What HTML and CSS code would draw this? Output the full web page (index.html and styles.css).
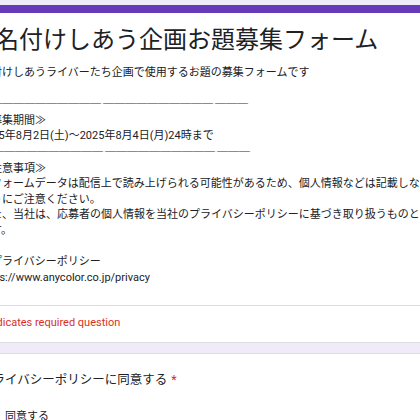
FILE: index.html
```html
<!DOCTYPE html>
<html lang="ja">

<head>
    <meta charset="UTF-8" />
    <meta name="viewport" content="width=device-width, initial-scale=1.0" />
    <title>名付けしあう企画お題募集フォーム</title>
    <link rel="stylesheet" href="styles.css">
</head>

<body>
    <div class="form">
        <!-- ヘッダー -->
        <div class="card head-card">
            <div class="accent"></div>
            <div class="head">
                <h1 class="title">名付けしあう企画お題募集フォーム</h1>
                <div class="desc">名付けしあうライバーたち企画で使用するお題の募集フォームです

<span class="rule">───────────</span><span class="rule">──────────</span><span class="rule">───</span>
≪募集期間≫
2025年8月2日(土)〜2025年8月4日(月)24時まで
<span class="rule">───────────</span><span class="rule">──────────</span><span class="rule">───</span>
≪注意事項≫
本フォームデータは配信上で読み上げられる可能性があるため、個人情報などは記載しないようにご注意ください。
また、当社は、応募者の個人情報を当社のプライバシーポリシーに基づき取り扱うものとします。

◆プライバシーポリシー
https://www.anycolor.co.jp/privacy</div>
            </div>
            <div class="required">* Indicates required question</div>
        </div>

        <!-- 質問 -->
        <div class="card question">
            <div class="q-title">プライバシーポリシーに同意する<span class="star">*</span></div>
            <label class="option">
                <span class="box"></span>
                <span>同意する</span>
            </label>
        </div>
    </div>
</body>

</html>
```

FILE: styles.css
```css
body {
    margin: 0;
    padding: 0;
    background-color: #f0ebf8;
    color: #202124;
    font-family: Roboto, "Noto Sans CJK JP", sans-serif;
    overflow: hidden;
}

.form {
    width: 640px;
    margin-left: -45px;
    padding-top: 5px;
}

.card {
    background-color: #fff;
    border: 1px solid #dadce0;
    border-radius: 8px;
    overflow: hidden;
}

.head-card {
    border-top: none;
}

.accent {
    height: 8px;
    background-color: #673ab7;
}

.head {
    padding: 11px 24px 20px;
    border-bottom: 1px solid #dadce0;
}

.title {
    margin: 0 0 9px 15px;
    font-size: 24px;
    font-weight: normal;
    line-height: 32px;
}

.desc {
    width: 456px;
    font-size: 11px;
    line-height: 15.6px;
    white-space: pre-line;
}

.rule {
    font-family: "Noto Sans CJK JP", sans-serif;
    font-weight: bold;
    color: #333;
}

.rule + .rule {
    margin-left: 2px;
}

.required {
    padding: 9px 24px 12px;
    font-size: 11px;
    line-height: 15px;
    color: #d93025;
}

.question {
    margin-top: 10px;
    padding: 17px 24px 24px;
}

.q-title {
    font-size: 12.5px;
    line-height: 18px;
}

.star {
    color: #d93025;
    margin-left: 4px;
}

.option {
    display: flex;
    align-items: center;
    gap: 11px;
    margin-top: 20px;
    font-size: 11px;
    line-height: 16px;
}

.box {
    width: 14px;
    height: 14px;
    border: 2px solid #5f6368;
    border-radius: 2px;
    box-sizing: border-box;
}
```
